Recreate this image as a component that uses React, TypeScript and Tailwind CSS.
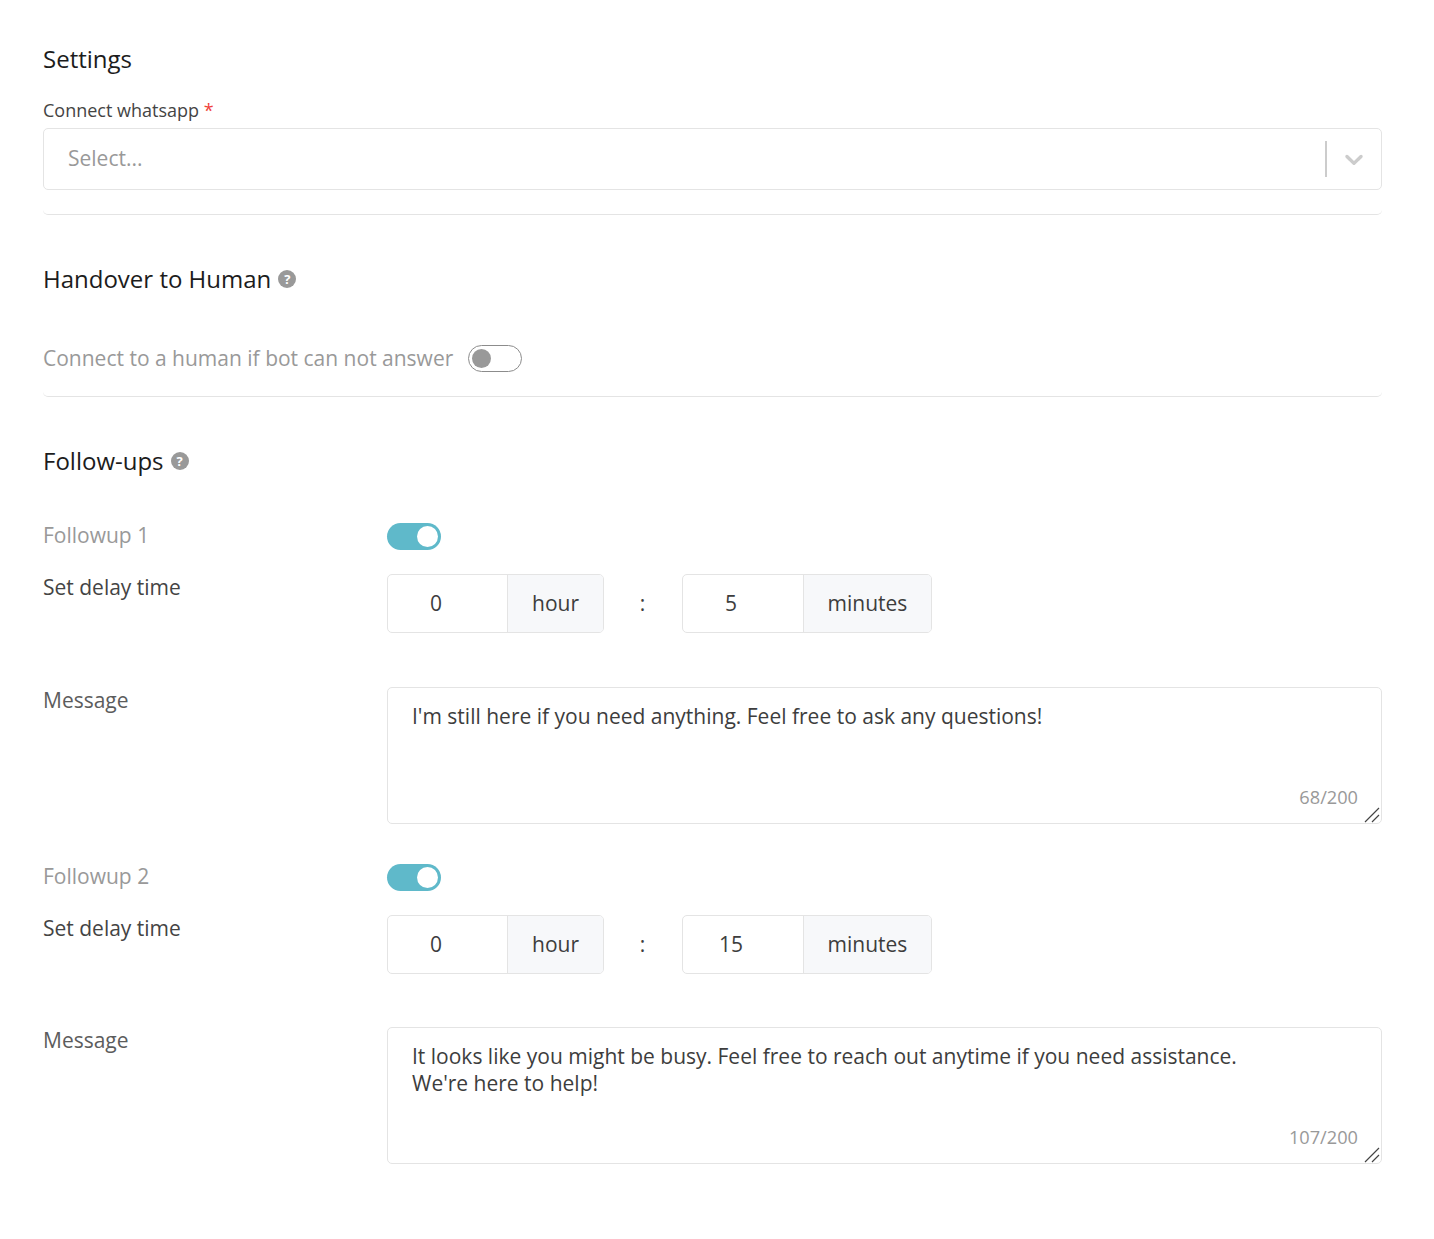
const font = "font-['Open_Sans','Noto_Sans',sans-serif]";

const HelpDot = () => (
  <span className="ml-[7px] flex h-[18px] w-[18px] items-center justify-center rounded-full bg-[#999999] text-[13px] font-bold leading-none text-white">
    ?
  </span>
);

const Toggle = ({ on }: { on: boolean }) =>
  on ? (
    <div className="flex h-[27px] w-[54px] items-center justify-end rounded-full bg-[#5fb9ca] pr-[3px]">
      <div className="h-[21px] w-[21px] rounded-full bg-white" />
    </div>
  ) : (
    <div className="flex h-[27px] w-[54px] items-center rounded-full border border-[#8c8c8c] bg-white pl-[3px]">
      <div className="h-[19px] w-[19px] rounded-full bg-[#999999]" />
    </div>
  );

const ResizeGrip = () => (
  <svg className="pointer-events-none absolute bottom-[1px] right-[2px]" width="16" height="16" viewBox="0 0 16 16" fill="none">
    <path d="M1 15 L15 1 M8 15 L15 8" stroke="#444444" strokeWidth="1.2" />
  </svg>
);

interface Followup {
  name: string;
  minutes: string;
  minutesClass: string;
  messageGap: string;
  message: string;
  count: string;
}

const followups: Followup[] = [
  {
    name: "Followup 1",
    minutes: "5",
    minutesClass: "pl-[42px]",
    messageGap: "mt-[54px]",
    message: "I'm still here if you need anything. Feel free to ask any questions!",
    count: "68/200",
  },
  {
    name: "Followup 2",
    minutes: "15",
    minutesClass: "pl-[36px]",
    messageGap: "mt-[53px]",
    message: "It looks like you might be busy. Feel free to reach out anytime if you need assistance.\nWe're here to help!",
    count: "107/200",
  },
];

const FollowupBlock = ({ item }: { item: Followup }) => (
  <div className="grid grid-cols-[344px_995px]">
    <div className="h-[27px] text-[21px] leading-[24px] text-[#999999]">{item.name}</div>
    <Toggle on />

    <div className="mt-[24px] text-[21px] leading-[26px] text-[#444444]">Set delay time</div>
    <div className="mt-[24px] flex items-center text-[21px] text-[#3d3d3d]">
      <div className="flex h-[59px] overflow-hidden rounded-[5px] border border-[#e4e4e4]">
        <div className="flex w-[119px] items-center pl-[42px]">0</div>
        <div className="flex w-[96px] items-center justify-center border-l border-[#e4e4e4] bg-[#f7f8fa]">hour</div>
      </div>
      <span className="w-[78px] pr-[1px] text-center">:</span>
      <div className="flex h-[59px] overflow-hidden rounded-[5px] border border-[#e4e4e4]">
        <div className={`flex w-[120px] items-center ${item.minutesClass}`}>{item.minutes}</div>
        <div className="flex w-[128px] items-center justify-center border-l border-[#e4e4e4] bg-[#f7f8fa]">minutes</div>
      </div>
    </div>

    <div className={`${item.messageGap} text-[21px] leading-[26px] text-[#5c5c5c]`}>Message</div>
    <div className={`${item.messageGap} relative h-[137px]`}>
      <textarea
        readOnly
        value={item.message}
        className={`${font} block h-[137px] w-[995px] resize-none rounded-[5px] border border-[#e4e4e4] px-[24px] py-[15px] text-[21px] leading-[27px] text-[#3d3d3d] outline-none`}
      />
      <span className="absolute bottom-[16px] right-[24px] text-[18.2px] leading-[22px] text-[#999999]">{item.count}</span>
      <ResizeGrip />
    </div>
  </div>
);

export default function App() {
  return (
    <div className={`${font} min-h-[1239px] bg-white px-[43px] pt-[41px]`}>
      <div className="w-[1339px]">
        <section className="rounded-b-[5px] border-b border-[#e4e4e4] pb-[24px]">
          <h2 className="text-[24px] font-medium leading-[36px] text-[#1c1c1c]">Settings</h2>
          <label className="mt-[21px] block text-[18px] leading-[24px] text-[#444444]">
            Connect whatsapp <span className="text-[#f0413a]">*</span>
          </label>
          <div className="mt-[6px] flex h-[62px] items-center rounded-[5px] border border-[#e4e4e4] pl-[24px]">
            <span className="flex-1 text-[21px] text-[#999999]">Select...</span>
            <div className="h-[36px] w-[2px] bg-[#cccccc]" />
            <svg className="mx-[12px]" width="30" height="30" viewBox="0 0 20 20" fill="#cccccc">
              <path d="M4.516 7.548c0.436-0.446 1.043-0.481 1.576 0l3.908 3.747 3.908-3.747c0.533-0.481 1.141-0.446 1.574 0 0.436 0.445 0.408 1.197 0 1.615-0.406 0.418-4.695 4.502-4.695 4.502-0.217 0.223-0.502 0.335-0.787 0.335s-0.57-0.112-0.789-0.335c0 0-4.287-4.084-4.695-4.502s-0.436-1.17 0-1.615z" />
            </svg>
          </div>
        </section>

        <section className="rounded-b-[5px] border-b border-[#e4e4e4] pb-[24px] pt-[46px]">
          <div className="flex items-center">
            <h2 className="text-[24px] font-medium leading-[36px] text-[#1c1c1c]">Handover to Human</h2>
            <HelpDot />
          </div>
          <div className="mt-[48px] flex items-center">
            <span className="text-[21px] leading-[25px] text-[#999999]">Connect to a human if bot can not answer</span>
            <div className="ml-[15px]">
              <Toggle on={false} />
            </div>
          </div>
        </section>

        <section className="pt-[46px]">
          <div className="flex items-center">
            <h2 className="text-[24px] font-medium leading-[36px] text-[#1c1c1c]">Follow-ups</h2>
            <HelpDot />
          </div>
          <div className="mt-[44px] flex flex-col gap-[40px]">
            {followups.map((item) => (
              <FollowupBlock key={item.name} item={item} />
            ))}
          </div>
        </section>
      </div>
    </div>
  );
}
